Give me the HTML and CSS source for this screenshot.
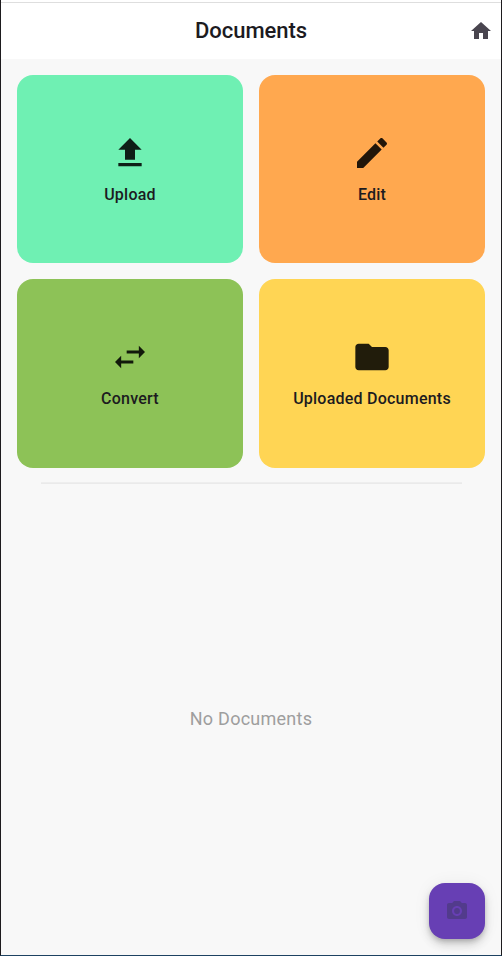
FILE: index.html
```html
<!DOCTYPE html>
<html lang="en">
<head>
<meta charset="utf-8">
<title>Documents</title>
<link rel="stylesheet" href="styles.css">
</head>
<body>
<div class="app">
  <header class="bar">
    <h1 class="title">Documents</h1>
    <svg class="home" viewBox="0 0 24 24"><path d="M10 20v-6h4v6h5v-8h3L12 3 2 12h3v8z"/></svg>
  </header>
  <main class="content">
    <div class="grid">
      <div class="card upload"><svg class="icon" viewBox="0 0 24 24"><path d="M9 16h6v-6h4l-7-7-7 7h4zm-4 2h14v2H5z"/></svg><span>Upload</span></div>
      <div class="card edit"><svg class="icon" viewBox="0 0 24 24"><path d="M3 17.25V21h3.75L17.81 9.94l-3.75-3.75L3 17.25zM20.71 7.04c.39-.39.39-1.02 0-1.41l-2.34-2.34c-.39-.39-1.02-.39-1.41 0l-1.83 1.83 3.75 3.75 1.83-1.83z"/></svg><span>Edit</span></div>
      <div class="card convert"><svg class="icon" viewBox="0 0 24 24"><path d="M6.7 11.200L3 15l3.700 3.800v-2.900H14v-1.800H6.700zM21 9l-3.700-3.800v2.900H10v1.800h7.300v2.900z"/></svg><span>Convert</span></div>
      <div class="card folder"><svg class="icon" viewBox="0 0 24 24"><path d="M10 4H4c-1.1 0-1.99.9-1.99 2L2 18c0 1.1.9 2 2 2h16c1.1 0 2-.9 2-2V8c0-1.1-.9-2-2-2h-8l-2-2z"/></svg><span>Uploaded Documents</span></div>
    </div>
    <hr class="divider">
    <p class="empty">No Documents</p>
  </main>
  <button class="fab" aria-label="Camera"><svg viewBox="0 0 24 24"><circle cx="12" cy="12" r="2.9"/><path d="M9 2L7.17 4H4c-1.1 0-2 .9-2 2v12c0 1.1.9 2 2 2h16c1.1 0 2-.9 2-2V6c0-1.100-.9-2-2-2h-3.170L15 2H9zm3 15c-2.760 0-5-2.240-5-5s2.240-5 5-5 5 2.240 5 5-2.240 5-5 5z"/></svg></button>
</div>
</body>
</html>
```
FILE: styles.css
```css
* { box-sizing: border-box; }
body { margin: 0; font-family: Roboto, "Liberation Sans", sans-serif; color: #1c1b1f; }
.app {
  position: relative;
  display: flex;
  flex-direction: column;
  height: 956px;
  border: 1px solid #1d1b1e;
  border-top: 0;
  border-bottom-color: #1d4261;
  background: #f8f8f8;
}
.bar {
  display: grid;
  grid-template-columns: 1fr auto 1fr;
  align-items: center;
  height: 59px;
  padding: 3px 8px 0;
  background: linear-gradient(#fff 2px, #dedede 2px, #dedede 3px, #fff 3px);
}
.title { grid-column: 2; margin: 0; font-size: 22px; font-weight: 500; line-height: 28px; letter-spacing: -.05px; }
.home { width: 24px; height: 24px; justify-self: end; fill: #49454f; }
.content { flex: 1; display: flex; flex-direction: column; padding: 16px; }
.grid { display: grid; grid-template-columns: 1fr 1fr; grid-auto-rows: 188.300px; gap: 16px; }
.card {
  display: flex;
  flex-direction: column;
  align-items: center;
  padding-top: 58px;
  gap: 10px;
  border-radius: 16px;
  font-size: 16px;
  font-weight: 500;
  line-height: 24px;
  letter-spacing: .23px;
}
.icon { width: 40px; height: 40px; fill: rgba(0,0,0,.87); }
.upload { background: #6ff0b3; }
.edit { background: #ffa84f; }
.convert { background: #8dc257; }
.folder { background: #ffd554; }
.divider { width: 421px; height: 2px; margin: 14.400px auto 0; border: 0; background: linear-gradient(#f0f0f0, #e8e8e8); }
.empty { margin: auto; padding-top: 16px; color: #9e9e9e; font-size: 18px; line-height: 24px; letter-spacing: .25px; }
.fab {
  position: absolute;
  right: 16px;
  bottom: 16px;
  display: grid;
  place-items: center;
  width: 56px;
  height: 56px;
  padding: 0;
  border: 0;
  border-radius: 16px;
  background: #673fb4;
  box-shadow: 0 3px 5px -1px rgba(0,0,0,.2), 0 6px 10px rgba(0,0,0,.14), 0 1px 18px rgba(0,0,0,.06);
}
.fab svg { width: 24px; height: 24px; fill: #523b8c; }
```
